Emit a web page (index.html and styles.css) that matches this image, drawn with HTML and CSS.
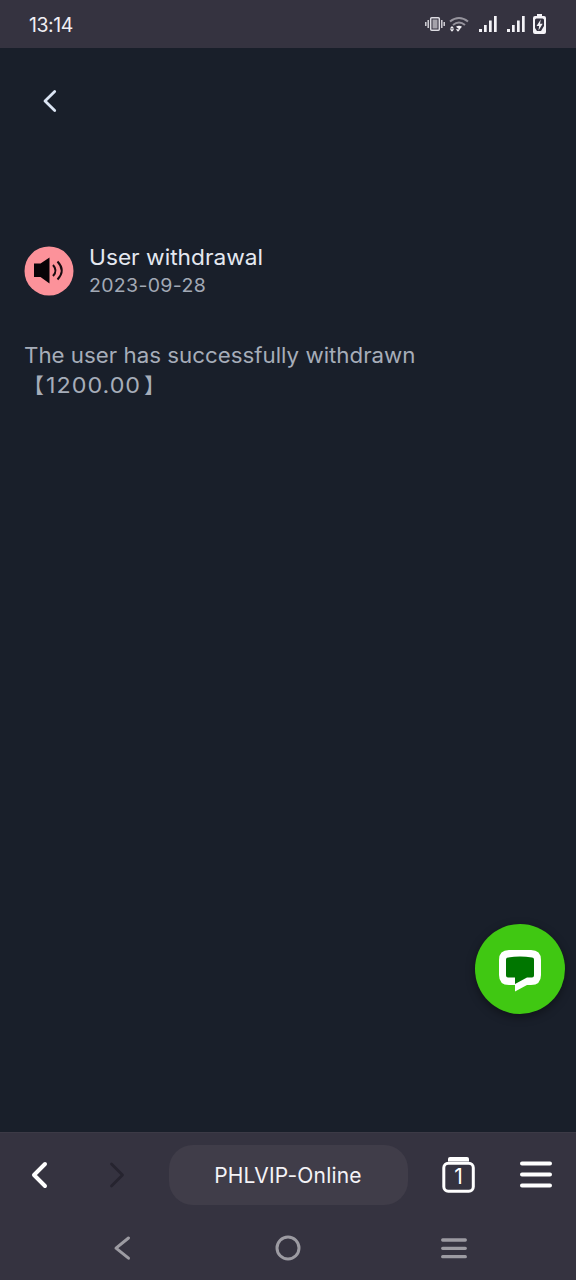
FILE: index.html
```html
<!DOCTYPE html>
<html lang="en">
<head>
<meta charset="utf-8">
<title>PHLVIP-Online</title>
<link rel="stylesheet" href="styles.css">
</head>
<body>
<div class="screen">
  <header class="status">
    <span class="clock">13:14</span>
    <div class="status-icons">
      <svg width="20" height="16" viewBox="0 0 20 16" fill="none" stroke="#dddce2">
        <rect x="5.700" y="1.700" width="8.600" height="12.600" rx="1" stroke-width="1.500"/>
        <rect x="7.500" y="3.500" width="5" height="9" fill="#a4a2aa" stroke="none"/>
        <path d="M3.200 4v8M.8 6v4M16.800 4v8M19.200 6v4" stroke-width="1.400"/>
      </svg>
      <svg class="wifi" width="20" height="17" viewBox="0 0 20 17" fill="none">
        <path d="M1 5.500Q10-1.500 19 5.500M4 9Q10 4 16 9" stroke="#96949d" stroke-width="2"/>
        <path d="M7 10.800Q10 8.500 13 10.800L10.500 13.500Z" fill="#f4f3f7"/>
        <path d="m.8 12.500 2.200-2.500 2.200 2.500zM.8 13.300 3 15.800l2.200-2.500zM6.800 13.300 9 15.800l2.200-2.500z" fill="#f4f3f7"/>
      </svg>
      <svg class="signal" width="18" height="16" viewBox="0 0 18 16" fill="#f4f3f7"><path d="M0 13h3v3H0zM5 9h2.700v7H5zM10 4.500h2.700v11.500H10zM15 0h2.700v16H15z"/></svg>
      <svg class="signal" width="18" height="16" viewBox="0 0 18 16" fill="#f4f3f7"><path d="M0 13h3v3H0zM5 9h2.700v7H5zM10 4.500h2.700v11.500H10zM15 0h2.700v16H15z"/></svg>
      <svg class="battery" width="13" height="20" viewBox="0 0 13 20">
        <path d="M4 0h5v2h2q2 0 2 2v14q0 2-2 2H2q-2 0-2-2V4q0-2 2-2h2z" fill="#f4f3f7"/>
        <path d="M3.500 4.500h6q1.500 0 1.500 1.500v6L8 17H4l-2-3V6q0-1.500 1.500-1.500z" fill="#353340"/>
        <path d="M7.800 5.500 3.500 12h2.600l-.6 4.500L9.700 9.800H7z" fill="#f4f3f7"/>
      </svg>
    </div>
  </header>

  <main class="page">
    <svg class="page-back" width="16" height="24" viewBox="0 0 16 24" fill="none" stroke="#dbe5f3" stroke-width="2.800" stroke-linecap="round" stroke-linejoin="round"><path d="M12.700 2.500 3 12l9.700 9.500"/></svg>
    <section class="notice">
      <svg class="speaker" width="50" height="50" viewBox="0 0 50 50">
        <circle cx="25" cy="25" r="24.500" fill="#fc929a"/>
        <path d="M10 17.500h6.500L25.500 11.500v26L16.500 31H10z" fill="#080307"/>
        <path d="M29 19q5 5.500 0 11M33.500 15.500q8.500 9 0 18" fill="none" stroke="#180b10" stroke-width="2"/>
      </svg>
      <div class="notice-text">
        <h1 class="notice-title">User withdrawal</h1>
        <div class="notice-date">2023-09-28</div>
      </div>
    </section>
    <p class="message"><span class="message-line">The user has successfully withdrawn</span><span class="amount">【<span class="value">1200.00</span>】</span></p>
    <div class="chat">
      <svg width="90" height="90" viewBox="0 0 90 90">
        <path d="M34 26h22q10 0 10 10v15q0 10-10 10h-4l-12 6.500V61h-6q-10 0-10-10V36q0-10 10-10z" fill="#fff"/>
        <path d="M33 33.500q12-2 24 0 2 0 2 2v16q0 2-2 2h-5l-12 6.500v-6.500h-7q-2 0-2-2v-16q0-2 2-2z" fill="#007600"/>
      </svg>
    </div>
  </main>

  <footer class="bottom">
    <nav class="toolbar">
      <svg width="18" height="28" viewBox="0 0 18 28" fill="none" stroke="#fff" stroke-width="4" stroke-linecap="round" stroke-linejoin="round"><path d="M15 3 4 14l11 11"/></svg>
      <svg width="18" height="28" viewBox="0 0 18 28" fill="none" stroke="#26242f" stroke-width="2.800" stroke-linecap="round" stroke-linejoin="round"><path d="m3.500 3 11 11-11 11"/></svg>
      <div class="address">PHLVIP-Online</div>
      <div class="tabs">
        <svg width="34" height="38" viewBox="0 0 34 38" fill="none"><path d="M6 5.500V3q0-2 2-2h17q2 0 2 2v2.500z" fill="#fff"/><rect x="1.800" y="7.300" width="29.500" height="28" rx="4.500" stroke="#fff" stroke-width="3"/></svg>
        <span class="tab-count">1</span>
      </div>
      <svg width="32" height="28" viewBox="0 0 32 28" fill="none" stroke="#fff" stroke-width="4" stroke-linecap="round"><path d="M2 2.500h28M2 13.500h28M2 24.500h28"/></svg>
    </nav>
    <nav class="system">
      <svg width="18" height="26" viewBox="0 0 18 26" fill="none" stroke="#9c9ba2" stroke-width="3" stroke-linecap="round" stroke-linejoin="round"><path d="M15.500 3 3 13.200l12.500 10"/></svg>
      <svg width="26" height="26" viewBox="0 0 26 26" fill="none" stroke="#9c9ba2" stroke-width="3"><circle cx="13" cy="13" r="11"/></svg>
      <svg width="26" height="26" viewBox="0 0 26 26" fill="none" stroke="#9c9ba2" stroke-width="3.300" stroke-linecap="round"><path d="M1.700 5h22.600M1.700 13.300h22.600M1.700 21.700h22.600"/></svg>
    </nav>
  </footer>
</div>
</body>
</html>
```
FILE: styles.css
```css
* { box-sizing: border-box; }
body { margin: 0; background: #191f2a; font-family: Inter, "Noto Sans CJK SC", sans-serif; }
svg { display: block; flex: none; }
.screen { width: 576px; height: 1280px; display: flex; flex-direction: column; overflow: hidden; }
.status { height: 48px; flex: none; background: #353340; display: flex; justify-content: space-between; align-items: center; padding: 0 30px 0 29px; }
.clock { color: #f0eff4; font-size: 19.500px; line-height: 24px; letter-spacing: -0.450px; padding-top: 2px; }
.status-icons { display: flex; align-items: center; }
.wifi { margin-left: 4px; }
.signal { margin-left: 10px; }
.battery { margin-left: 8px; }
.page { flex: 1; position: relative; padding: 41px 25px 0 24px; }
.page-back { margin-left: 18px; }
.notice { display: flex; gap: 15px; margin-top: 132.500px; }
.notice-text { margin-top: -1.500px; }
.notice-title, .notice-date, .message-line, .value { transform-origin: left center; }
.notice-title { margin: 0; color: #e4e8f0; font-weight: 400; font-size: 21.500px; line-height: 26px; white-space: nowrap; transform: scaleX(1.056); }
.notice-date { color: #a2a9b5; font-size: 18.500px; line-height: 26px; margin-top: 2px; letter-spacing: 0.300px; transform: scaleX(1.055); }
.message { margin: 43px 0 0; color: #a6adb9; font-size: 21px; line-height: 30px; white-space: nowrap; }
.message-line { display: block; width: max-content; transform: scaleX(1.062); }
.amount { display: flex; margin-left: -1px; }
.value { width: 98px; letter-spacing: 0.900px; margin-left: 2px; transform: scaleX(1.110); }
.chat { position: absolute; right: 11px; bottom: 118px; width: 90px; height: 90px; border-radius: 50%; background: #40c812; box-shadow: 0 3px 10px #0006; }
.bottom { height: 148px; flex: none; background: #353340; border-top: 1px solid #3c3a46; }
.toolbar { height: 84px; display: grid; grid-template-columns: 78px 78px 264px 77px 78px; align-items: center; justify-items: center; }
.address { width: 239px; height: 60px; border-radius: 24px; background: #403d49; color: #f4f3f7; display: flex; align-items: center; justify-content: center; font-size: 21px; letter-spacing: 0.200px; padding-top: 1px; }
.tabs { display: grid; place-items: center; }
.tabs > * { grid-area: 1 / 1; }
.tab-count { color: #fff; font-size: 21px; line-height: 24px; padding-top: 4px; }
.system { height: 61px; padding: 0 39px; display: grid; grid-template-columns: repeat(3, 166px); align-items: center; justify-items: center; }
```
